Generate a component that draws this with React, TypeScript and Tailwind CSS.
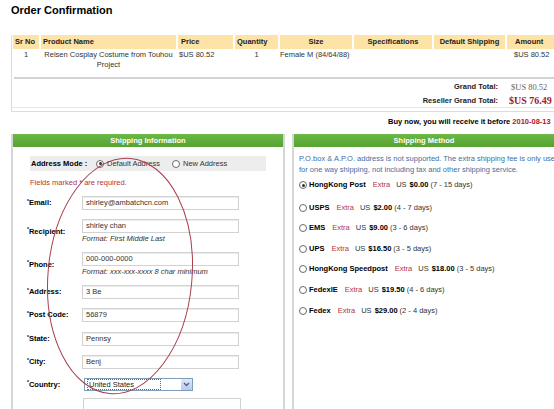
import React from "react";

const cols = [
  { label: "Sr No", w: "w-[26px]", align: "text-left pl-[2px]" },
  { label: "Product Name", w: "w-[135px]", align: "text-left pl-[2px]" },
  { label: "Price", w: "w-[55px]", align: "text-left pl-[3px]" },
  { label: "Quantity", w: "w-[43px]", align: "text-left pl-[2px]" },
  { label: "Size", w: "w-[72px]", align: "text-center" },
  { label: "Specifications", w: "w-[78px]", align: "text-center" },
  { label: "Default Shipping", w: "w-[71px]", align: "text-center" },
  { label: "Amount", w: "w-[56px]", align: "text-left pl-[8px]" },
];

const methods = [
  { name: "HongKong Post", price: "$0.00", days: "(7 - 15 days)", checked: true },
  { name: "USPS", price: "$2.00", days: "(4 - 7 days)" },
  { name: "EMS", price: "$9.00", days: "(3 - 6 days)" },
  { name: "UPS", price: "$16.50", days: "(3 - 5 days)" },
  { name: "HongKong Speedpost", price: "$18.00", days: "(3 - 5 days)" },
  { name: "FedexIE", price: "$19.50", days: "(4 - 6 days)" },
  { name: "Fedex", price: "$29.00", days: "(2 - 4 days)" },
];

function Radio({ checked }: { checked?: boolean }) {
  return (
    <span className="flex h-[8px] w-[8px] shrink-0 items-center justify-center rounded-full border border-[#6b6b6b] bg-white">
      {checked && <span className="h-[3px] w-[3px] rounded-full bg-[#333]" />}
    </span>
  );
}

function Field({
  label,
  value,
  hint,
  mt,
}: {
  label: string;
  value: string;
  hint?: string;
  mt: string;
}) {
  return (
    <div className={`flex items-center ${mt}`}>
      <span className="w-[55px] font-bold text-black">
        <sup className="text-[5px]">*</sup>
        {label}
      </span>
      <div className="flex flex-col">
        <div className="flex h-[14px] w-[157px] items-center border border-[#d2d2d2] px-[3px] text-[#333] shadow-[inset_0_1px_1px_rgba(0,0,0,0.08)]">
          {value}
        </div>
        {hint && <span className="mt-[1px] h-[10px] leading-[10px] italic text-[#333]">{hint}</span>}
      </div>
    </div>
  );
}

export default function App() {
  return (
    <div className="relative h-[409px] w-[554px] overflow-hidden bg-white font-['Liberation_Sans',Arial,sans-serif] text-[7.5px] leading-[10px] text-[#333]">
      <h1 className="pl-[11px] pt-[4px] text-[11px] font-bold leading-[13px] text-black">Order Confirmation</h1>

      {/* order table */}
      <div className="ml-[11px] mt-[18px] w-[560px] border-b border-l border-[#dcdcdc]">
        <div className="flex gap-[2px] pl-[1px]">
          {cols.map((c) => (
            <div key={c.label} className={`${c.w} ${c.align} h-[14px] bg-[#fde3a6] font-bold leading-[14px] text-[#222]`}>
              {c.label}
            </div>
          ))}
        </div>
        <div className="flex h-[28px] gap-[2px] pl-[1px] pt-[1px]">
          <div className="w-[26px] text-center">1</div>
          <div className="w-[135px] text-center leading-[10px]">
            Reisen Cosplay Costume from Touhou
            <br />
            Project
          </div>
          <div className="w-[55px] pl-[1px]">$US 80.52</div>
          <div className="w-[43px] text-center">1</div>
          <div className="w-[72px]">Female M (84/64/88)</div>
          <div className="w-[78px]" />
          <div className="w-[71px]" />
          <div className="w-[56px] pl-[7px]">$US 80.52</div>
        </div>
        <div className="ml-[2px] h-[2px] bg-[#d4d4d4]" />
        <div className="flex flex-col pb-[3px] pt-[1px]">
          <div className="flex h-[14px] items-center">
            <span className="w-[486px] text-right font-bold text-[#222]">Grand Total:</span>
            <span className="ml-[13px] font-['Liberation_Serif',serif] text-[8.5px] text-[#666]">$US 80.52</span>
          </div>
          <div className="flex h-[14px] items-center border-b border-[#e6e6e6]">
            <span className="w-[486px] text-right font-bold text-[#222]">Reseller Grand Total:</span>
            <span className="ml-[11px] font-['Liberation_Serif',serif] text-[10px] font-bold text-[#a3172d]">$US 76.49</span>
          </div>
        </div>
      </div>
      <div className="ml-[388px] mt-[5px] whitespace-nowrap font-bold text-black">
        Buy now, you will receive it before <span className="text-[#b0162a]">2010-08-13</span>
      </div>

      {/* panels */}
      <div className="mt-[7px] flex gap-[7px] pl-[11px]">
        <div className="h-[290px] w-[274px] shrink-0 border-x-2 border-[#d6d6d6]">
          <div className="flex h-[13px] items-center justify-center bg-gradient-to-b from-[#6cb845] to-[#56a232] font-bold text-white">
            Shipping Information
          </div>
          <div className="pl-[14px]">
            <div className="ml-[3px] mt-[9px] flex h-[15px] w-[236px] items-center bg-[#ededed] pl-[1px]">
              <span className="w-[65px] font-bold text-black">Address Mode :</span>
              <Radio checked />
              <span className="ml-[3px] w-[65px]">Default Address</span>
              <Radio />
              <span className="ml-[3px]">New Address</span>
            </div>
            <div className="ml-[3px] mt-[7px] text-[#b3343c]">Fields marked * are required.</div>
            <Field label="Email:" value="shirley@ambatchcn.com" mt="mt-[8px]" />
            <Field label="Recipient:" value="shirley chan" hint="Format: First Middle Last" mt="mt-[9px]" />
            <Field label="Phone:" value="000-000-0000" hint="Format: xxx-xxx-xxxx 8 char minimum" mt="mt-[8px]" />
            <Field label="Address:" value="3 Be" mt="mt-[8px]" />
            <Field label="Post Code:" value="56879" mt="mt-[9px]" />
            <Field label="State:" value="Pennsy" mt="mt-[10px]" />
            <Field label="City:" value="Benj" mt="mt-[9px]" />
            <div className="mt-[9px] flex items-center">
              <span className="w-[57px] font-bold text-black">
                <sup className="text-[5px]">*</sup>Country:
              </span>
              <div className="flex h-[13px] w-[109px] items-center border border-[#7f9db9] bg-white pl-[2px] text-[#222]">
                <span className="flex-1 border border-dotted border-[#666] px-[1px] leading-[9px]">United States</span>
                <span className="ml-[20px] flex h-[11px] w-[11px] items-center justify-center rounded-[1px] bg-gradient-to-b from-[#dfe8fb] to-[#b7c9f0]">
                  <svg width="7" height="5" viewBox="0 0 7 5">
                    <path d="M1 1 L3.5 3.5 L6 1" fill="none" stroke="#4d6185" strokeWidth="1.4" />
                  </svg>
                </span>
              </div>
            </div>
            <div className="ml-[56px] mt-[7px] h-[14px] w-[158px] border border-[#d2d2d2]" />
          </div>
        </div>

        <div className="h-[290px] w-[280px] shrink-0 border-l-2 border-[#d6d6d6]">
          <div className="flex h-[13px] items-center justify-center bg-gradient-to-b from-[#6cb845] to-[#56a232] pr-[18px] font-bold text-white">
            Shipping Method
          </div>
          <div className="pl-[5px] pt-[6px]">
            <p className="whitespace-nowrap leading-[11px] text-[#3d6fa5]">
              P.O.box &amp; A.P.O. address is not supported. The extra shipping fee is only use
              <br />
              for one way shipping, not including tax and other shipping service.
            </p>
            <div className="mt-[5px] flex flex-col gap-[10.6px]">
              {methods.map((m, i) => (
                <div key={m.name} className={`flex items-center whitespace-nowrap ${i === 1 ? "mt-[2px]" : ""}`}>
                  <Radio checked={m.checked} />
                  <span className="ml-[2px] font-bold text-black">{m.name}</span>
                  <span className="ml-[7px] text-[#b3343c]">Extra</span>
                  <span className="ml-[6px]">US</span>
                  <span className="ml-[3px] font-bold text-black">{m.price}</span>
                  <span className="ml-[2px]">{m.days}</span>
                </div>
              ))}
            </div>
          </div>
        </div>
      </div>

      {/* hand-drawn annotation circle */}
      <svg className="pointer-events-none absolute left-0 top-0" width="554" height="409" viewBox="0 0 554 409">
        <ellipse
          cx="120"
          cy="276"
          rx="72"
          ry="118"
          transform="rotate(5 120 276)"
          fill="none"
          stroke="#a8404e"
          strokeWidth="1"
        />
      </svg>
    </div>
  );
}
